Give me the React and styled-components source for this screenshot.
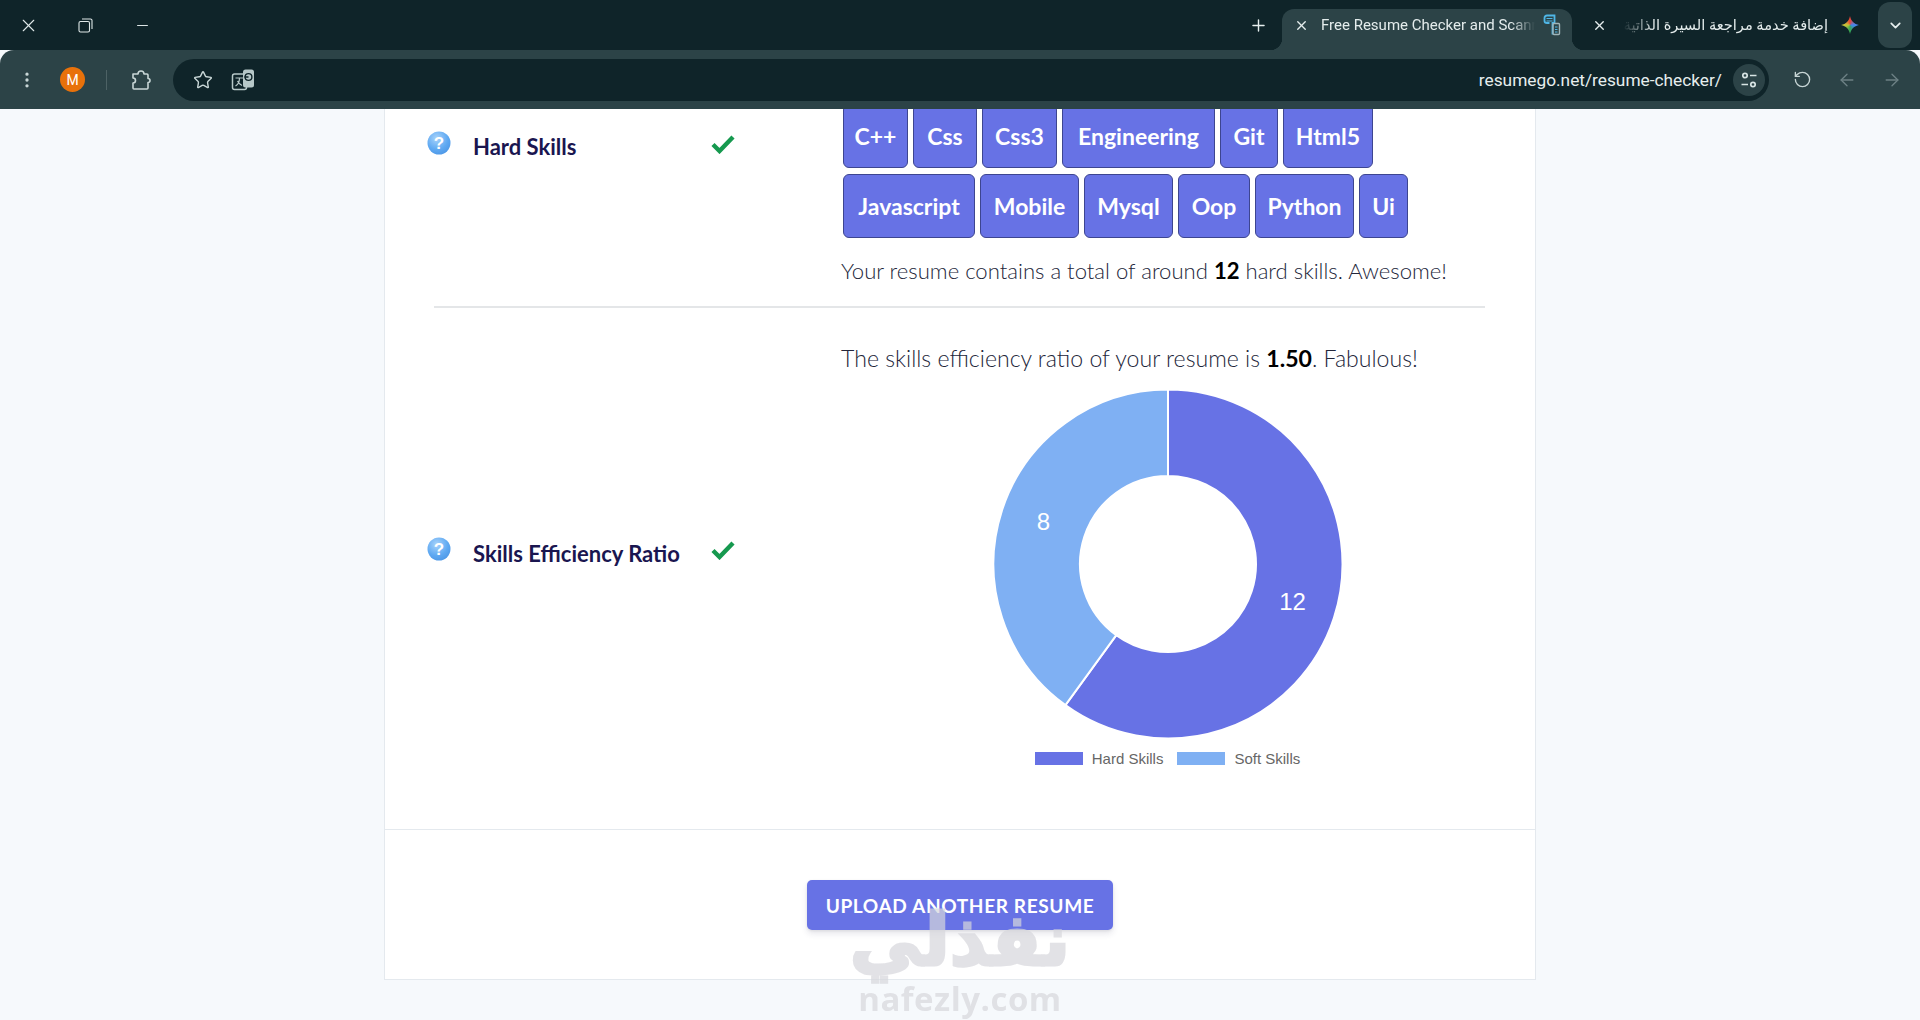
import React from "react";
import styled, { createGlobalStyle } from "styled-components";
import { X, Minus, Plus, Star, RotateCcw, ArrowLeft, ArrowRight, ChevronDown, EllipsisVertical } from "lucide-react";

const CHROME_DARK = "#0f2429";
const CHROME = "#2c4347";
const BRAND = "#6772e5";
const SOFT = "#7fb0f3";

const GlobalStyle = createGlobalStyle`
  html, body { margin: 0; padding: 0; height: 100%; overflow: hidden; background: #f6f9fc; }
  * { box-sizing: border-box; }
  body { font-family: "Lato", "Noto Sans", sans-serif; }
`;

const Page = styled.div`
  height: 1020px;
  display: flex;
  flex-direction: column;
  position: relative;
  overflow: hidden;
`;

/* ---------- browser chrome ---------- */
const TabStrip = styled.div`
  height: 50px;
  flex: none;
  background: ${CHROME_DARK};
  display: flex;
  align-items: center;
  color: #e6eeee;
  font-family: "Roboto", sans-serif;
`;

const WindowButton = styled.div`
  width: 57px;
  height: 48px;
  display: flex;
  align-items: center;
  justify-content: center;
  color: #dfe8e8;
`;

const WindowControls = styled.div`
  display: flex;
  margin-right: auto;
`;

const NewTab = styled.div`
  width: 44px;
  display: flex;
  justify-content: center;
  margin-right: 2px;
  color: #e6eeee;
`;

const Tab = styled.div`
  width: ${(p) => p.$width}px;
  height: 41px;
  align-self: flex-end;
  border-radius: 12px 12px 0 0;
  background: ${(p) => (p.$active ? CHROME : "transparent")};
  display: flex;
  align-items: center;
  padding: ${(p) => (p.$active ? "0 11px 9px 12px" : "0 8px 9px 20px")};
  position: relative;
  ${(p) =>
    p.$active &&
    `
    &::before, &::after {
      content: "";
      position: absolute;
      bottom: 0;
      width: 12px;
      height: 12px;
    }
    &::before { left: -12px; background: radial-gradient(circle at 0 0, transparent 12px, ${CHROME} 12.5px); }
    &::after { right: -12px; background: radial-gradient(circle at 100% 0, transparent 12px, ${CHROME} 12.5px); }
  `}
`;

const TabTitle = styled.div`
  flex: 1;
  min-width: 0;
  margin: ${(p) => (p.$rtl ? "0 13px 0 12px" : "0 8px 0 12px")};
  white-space: nowrap;
  overflow: hidden;
  color: #e4ecec;
  font-size: ${(p) => (p.$rtl ? "14.6px" : "15px")};
  mask-image: ${(p) => (p.$rtl ? "linear-gradient(to right, transparent 4px, #000 36px)" : "linear-gradient(to left, transparent, #000 24px)")};
  direction: ${(p) => (p.$rtl ? "rtl" : "ltr")};
  font-family: "Roboto", "DejaVu Sans", sans-serif;
`;

const TabList = styled.div`
  width: 34px;
  height: 46px;
  margin: 0 8px 0 11px;
  border-radius: 12px;
  background: ${CHROME};
  display: flex;
  align-items: center;
  justify-content: center;
`;

const Toolbar = styled.div`
  height: 59px;
  flex: none;
  background: ${CHROME};
  border-radius: 14px 14px 0 0;
  display: flex;
  align-items: center;
  color: #c8d6d6;
  position: relative;
  z-index: 2;
  overflow: hidden;
`;

const ToolIcon = styled.div`
  width: ${(p) => p.$w || 44}px;
  flex: none;
  display: flex;
  justify-content: center;
  align-items: center;
  color: ${(p) => p.$color || "#c8d6d6"};
`;

const Avatar = styled.div`
  width: 25px;
  height: 25px;
  flex: none;
  border-radius: 50%;
  background: #e8710a;
  color: #fff;
  font: 14px "Roboto", sans-serif;
  display: flex;
  align-items: center;
  justify-content: center;
  margin: 0 21px 0 6px;
`;

const Sep = styled.div`
  width: 1px;
  height: 20px;
  flex: none;
  background: #4d6265;
  margin-right: 12px;
`;

const Omnibox = styled.div`
  width: 1596px;
  height: 42px;
  flex: none;
  margin-left: 10px;
  border-radius: 21px;
  background: ${CHROME_DARK};
  display: flex;
  align-items: center;
  padding: 0 4px 0 10px;
`;

const Url = styled.div`
  margin-left: auto;
  margin-right: 11px;
  font: 17.3px "Roboto", sans-serif;
  color: #e6eeee;
`;

const TuneButton = styled.div`
  width: 32px;
  height: 32px;
  border-radius: 50%;
  background: ${CHROME};
  display: flex;
  align-items: center;
  justify-content: center;
`;

/* ---------- page content ---------- */
const Main = styled.main`
  flex: 1;
  min-height: 0;
  overflow: hidden;
`;

const Card = styled.section`
  width: 1152px;
  height: 871px;
  margin: 0 auto;
  background: #fff;
  border: 1px solid #e4e9ee;
  border-top: 0;
`;

const Rows = styled.div`
  padding: 0 41px 0 42px;
`;

const SkillRow = styled.div`
  display: grid;
  grid-template-columns: 414px 1fr;
  padding: ${(p) => p.$padding};
`;

const SkillLabel = styled.div`
  display: flex;
  align-items: center;
  align-self: ${(p) => (p.$top ? "start" : "center")};
  margin-top: ${(p) => (p.$top ? "20px" : "2px")};
`;

const HelpSlot = styled.div`
  width: 46px;
  margin-bottom: 9px;
  line-height: 0;
`;

const Name = styled.div`
  width: 238px;
  font-size: 22px;
  line-height: 36px;
  font-weight: 700;
  color: #1a1650;
`;

const CheckSlot = styled.div`
  margin-bottom: 7px;
  line-height: 0;
`;

const Chips = styled.div`
  display: flex;
  flex-wrap: wrap;
  gap: 6px 5px;
  margin: -5px 0 0 2px;
`;

const Chip = styled.span`
  width: ${(p) => p.$width}px;
  height: 64px;
  display: flex;
  align-items: center;
  justify-content: center;
  background: ${BRAND};
  border: 1px solid #3d4590;
  border-radius: 6px;
  color: #fff;
  font-size: 23px;
  font-weight: 700;
`;

const Note = styled.p`
  margin: ${(p) => (p.$first ? "0" : "14px 0 0")};
  font-size: ${(p) => p.$size}px;
  line-height: 38px;
  font-weight: 300;
  color: #23263a;

  b {
    color: #000;
    font-weight: 700;
  }
`;

const Divider = styled.hr`
  margin: 16px 9px 0 7px;
  border: 0;
  border-top: 2px solid #e4e6e8;
`;

const Chart = styled.figure`
  margin: 12px 0 0;
  display: flex;
  flex-direction: column;
  align-items: center;
`;

const Legend = styled.div`
  display: flex;
  gap: 14px;
  margin-top: 11px;
  font: 15px "Liberation Sans", sans-serif;
  color: #666;
`;

const LegendItem = styled.div`
  display: flex;
  align-items: center;
  gap: 9px;
  height: 16px;
`;

const Swatch = styled.i`
  width: 48px;
  height: 13px;
  background: ${(p) => p.$color};
`;

const Footer = styled.div`
  border-top: 1px solid #e4e9ee;
  padding-top: 50px;
  display: flex;
  justify-content: center;
`;

const UploadButton = styled.button`
  width: 306px;
  height: 50px;
  border: 0;
  border-radius: 5px;
  background: ${BRAND};
  color: #fff;
  font-family: "Lato", sans-serif;
  font-size: 19.1px;
  font-weight: 700;
  letter-spacing: 0.6px;
  box-shadow: 0 4px 6px rgba(50, 50, 93, 0.11), 0 1px 3px rgba(0, 0, 0, 0.08);
`;

/* watermark sits on top of the page */
const Watermark = styled.div`
  position: absolute;
  left: 760px;
  top: 898px;
  width: 400px;
  text-align: center;
  color: #d7d7dc;
  opacity: 0.7;
  pointer-events: none;
`;

const WatermarkAr = styled.div`
  font: 700 72px/84px "DejaVu Sans", sans-serif;
  -webkit-text-stroke: 3px #d7d7dc;
  direction: rtl;
  white-space: nowrap;
`;

const WatermarkEn = styled.div`
  font: 700 33px/34px "Open Sans", sans-serif;
  letter-spacing: 0.5px;
`;

const GeminiStar = styled.i`
  width: 18px;
  height: 18px;
  flex: none;
  background: conic-gradient(#ea4335, #4285f4 90deg, #34a853 180deg, #c8c63a 270deg, #ea4335);
  clip-path: path("M9 0C10 5 13 8 18 9C13 10 10 13 9 18C8 13 5 10 0 9C5 8 8 5 9 0Z");
`;

/* ---------- drawings ---------- */
const HelpIcon = () => (
  <svg width="24" height="24" viewBox="0 0 24 24">
    <defs>
      <radialGradient id="helpBall" cx="40%" cy="30%" r="80%">
        <stop offset="0" stopColor="#a8d3fb" />
        <stop offset="0.6" stopColor="#5fa9f2" />
        <stop offset="1" stopColor="#4a94e4" />
      </radialGradient>
    </defs>
    <circle cx="12" cy="12" r="11.5" fill="url(#helpBall)" />
    <text x="12" y="18" textAnchor="middle" fontFamily="Liberation Sans" fontWeight="700" fontSize="17" fill="#fff">?</text>
  </svg>
);

const CheckIcon = () => (
  <svg width="24" height="20" viewBox="0 0 24 20">
    <path d="M2 10.5 L8.5 17 L22 3" fill="none" stroke="#16994f" strokeWidth="4.4" />
  </svg>
);

const RestoreIcon = () => (
  <svg width="15" height="15" viewBox="0 0 15 15" fill="none" stroke="currentColor" strokeWidth="1.1">
    <rect x="1" y="3.500" width="10.500" height="10.500" rx="1.500" />
    <path d="M4 1h8.500A1.500 1.500 0 0 1 14 2.500V11" />
  </svg>
);

const PuzzleIcon = () => (
  <svg width="22" height="22" viewBox="0 0 22 22" fill="none" stroke="#c8d6d6" strokeWidth="1.600" strokeLinejoin="round">
    <path d="M3 5H8a3 3 0 0 1 6 0h3a1 1 0 0 1 1 1v3.500a2 2 0 0 1 0 4V19a1 1 0 0 1-1 1H4a1 1 0 0 1-1-1v-5a2.500 2.500 0 0 0 0-5V5z" />
  </svg>
);

const TuneIcon = () => (
  <svg width="18" height="18" viewBox="0 0 18 18" fill="none" stroke="#d8e4e4" strokeWidth="1.7">
    <circle cx="5" cy="4.5" r="2.2" />
    <path d="M10 4.5h6.5M1.5 13.5H8" />
    <circle cx="13" cy="13.5" r="2.2" />
  </svg>
);

const TranslateIcon = () => (
  <svg width="24" height="24" viewBox="0 0 24 24" fill="none">
    <rect x="1.5" y="6" width="14" height="15.5" rx="2" stroke="#b7c8c8" strokeWidth="1.5" />
    <path d="M4.5 10h8M8.5 10c0 4-1.5 6.5-4 8M6.5 13c1 2 2.500 3.500 4.500 4.500" stroke="#b7c8c8" strokeWidth="1.2" />
    <rect x="12" y="1.500" width="11" height="18" rx="2.500" fill="#b7c8c8" />
    <circle cx="17.500" cy="9" r="3.400" stroke={CHROME_DARK} strokeWidth="1.400" />
    <path d="M13.500 9h4" stroke={CHROME_DARK} strokeWidth="1.400" />
  </svg>
);

const ResumeFavicon = () => (
  <svg width="18" height="22" viewBox="0 0 18 22" fill="none">
    <path d="M4 1.500h7.500v7.500h-2v11.500M4 1.500C2.500 1.500 1.500 2.500 1.500 4v3c0 1.500 1 2 2.500 2h2.500" stroke="#4fb6e6" strokeWidth="1.800" />
    <path d="M3.500 4.500h6M3.500 7h6" stroke="#4fb6e6" strokeWidth="1.200" />
    <rect x="10" y="9.500" width="6.500" height="11" rx="1" stroke="#9fb4b8" strokeWidth="1.400" />
    <path d="M12 13h2.500M12 15.500h2.500M12 18h2.500" stroke="#4fb6e6" strokeWidth="1" />
  </svg>
);

const arcPath = (cx, cy, r, inner, from, to) => {
  const pt = (rad, a) => [cx + rad * Math.sin(a), cy - rad * Math.cos(a)];
  const [x1, y1] = pt(r, from);
  const [x2, y2] = pt(r, to);
  const [x3, y3] = pt(inner, to);
  const [x4, y4] = pt(inner, from);
  const large = to - from > Math.PI ? 1 : 0;
  return `M${x1} ${y1}A${r} ${r} 0 ${large} 1 ${x2} ${y2}L${x3} ${y3}A${inner} ${inner} 0 ${large} 0 ${x4} ${y4}Z`;
};

const skills = [
  { name: "Hard Skills", value: 12, color: BRAND },
  { name: "Soft Skills", value: 8, color: SOFT },
];

const Donut = () => {
  const total = skills.reduce((sum, s) => sum + s.value, 0);
  let angle = 0;
  return (
    <svg width="350" height="350" viewBox="0 0 350 350">
      {skills.map((s) => {
        const from = angle;
        const to = angle + (s.value / total) * Math.PI * 2;
        angle = to;
        const mid = (from + to) / 2;
        return (
          <g key={s.name}>
            <path d={arcPath(175, 175, 174.5, 88, from, to)} fill={s.color} stroke="#fff" strokeWidth="2" />
            <text
              x={175 + 131 * Math.sin(mid)}
              y={175 - 131 * Math.cos(mid) + 6}
              textAnchor="middle"
              fontFamily="Liberation Sans"
              fontSize="24"
              fill="#fff"
            >
              {s.value}
            </text>
          </g>
        );
      })}
    </svg>
  );
};

const hardSkills = [
  ["C++", 65], ["Css", 64], ["Css3", 75], ["Engineering", 153], ["Git", 58], ["Html5", 90],
  ["Javascript", 132], ["Mobile", 99], ["Mysql", 89], ["Oop", 72], ["Python", 99], ["Ui", 49],
];

export default function App() {
  return (
    <Page>
      <GlobalStyle />
      <TabStrip>
        <WindowControls>
          <WindowButton><X size={21} strokeWidth={1.3} /></WindowButton>
          <WindowButton><RestoreIcon /></WindowButton>
          <WindowButton><Minus size={17} strokeWidth={1.4} /></WindowButton>
        </WindowControls>
        <NewTab><Plus size={19} strokeWidth={1.8} /></NewTab>
        <Tab $active $width={290}>
          <X size={15} strokeWidth={2.2} />
          <TabTitle>Free Resume Checker and Scanner</TabTitle>
          <ResumeFavicon />
        </Tab>
        <Tab $width={295}>
          <X size={15} strokeWidth={2.2} />
          <TabTitle $rtl>إضافة خدمة مراجعة السيرة الذاتية</TabTitle>
          <GeminiStar />
        </Tab>
        <TabList><ChevronDown size={17} strokeWidth={2.4} /></TabList>
      </TabStrip>
      <Toolbar>
        <ToolIcon $w={54}><EllipsisVertical size={20} strokeWidth={2} /></ToolIcon>
        <Avatar>M</Avatar>
        <Sep />
        <ToolIcon $w={44}><PuzzleIcon /></ToolIcon>
        <Omnibox>
          <ToolIcon $w={40}><Star size={20} strokeWidth={1.7} /></ToolIcon>
          <ToolIcon $w={40}><TranslateIcon /></ToolIcon>
          <Url>resumego.net/resume-checker/</Url>
          <TuneButton><TuneIcon /></TuneButton>
        </Omnibox>
        <ToolIcon $w={66}><RotateCcw size={19} strokeWidth={1.7} /></ToolIcon>
        <ToolIcon $w={24} $color="#6c8084"><ArrowLeft size={20} strokeWidth={1.6} /></ToolIcon>
        <ToolIcon $w={66} $color="#6c8084"><ArrowRight size={20} strokeWidth={1.6} /></ToolIcon>
      </Toolbar>

      <Main>
        <Card>
          <Rows>
            <SkillRow>
              <SkillLabel $top>
                <HelpSlot><HelpIcon /></HelpSlot>
                <Name>Hard Skills</Name>
                <CheckSlot><CheckIcon /></CheckSlot>
              </SkillLabel>
              <div>
                <Chips>
                  {hardSkills.map(([s, w]) => <Chip key={s} $width={w}>{s}</Chip>)}
                </Chips>
                <Note $size={22.1}>Your resume contains a total of around <b>12</b> hard skills. Awesome!</Note>
              </div>
            </SkillRow>
            <Divider />
            <SkillRow $padding="31px 0 63px">
              <SkillLabel>
                <HelpSlot><HelpIcon /></HelpSlot>
                <Name>Skills Efficiency Ratio</Name>
                <CheckSlot><CheckIcon /></CheckSlot>
              </SkillLabel>
              <div>
                <Note $first $size={23.1}>The skills efficiency ratio of your resume is <b>1.50</b>. Fabulous!</Note>
                <Chart>
                  <Donut />
                  <Legend>
                    {skills.map((s) => (
                      <LegendItem key={s.name}>
                        <Swatch $color={s.color} />
                        {s.name}
                      </LegendItem>
                    ))}
                  </Legend>
                </Chart>
              </div>
            </SkillRow>
          </Rows>
          <Footer>
            <UploadButton>UPLOAD ANOTHER RESUME</UploadButton>
          </Footer>
        </Card>
      </Main>

      <Watermark>
        <WatermarkAr>نفذلي</WatermarkAr>
        <WatermarkEn>nafezly.com</WatermarkEn>
      </Watermark>
    </Page>
  );
}
